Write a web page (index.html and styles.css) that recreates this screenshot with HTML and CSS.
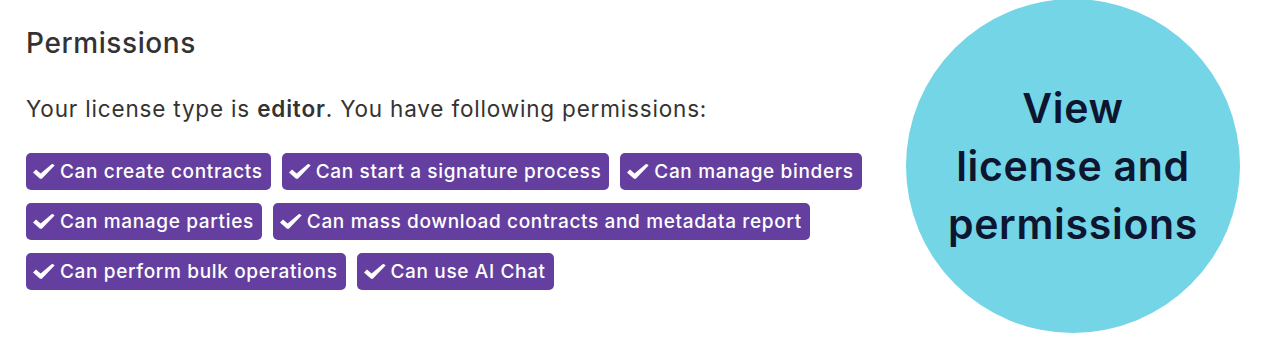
FILE: index.html
```html
<!DOCTYPE html>
<html>
<head>
<meta charset="utf-8">
<link rel="stylesheet" href="styles.css">
</head>
<body>
<div class="page">
  <section class="perms">
    <h2 class="title">Permissions</h2>
    <p class="intro">Your license type is <strong>editor</strong>. You have following permissions:</p>
    <div class="badges">
      <ul class="row">
        <li class="badge"><svg class="check" viewBox="0 0 22 15"><path d="M0 8.4 L3 5.4 L7.6 9.4 L18.6 0.2 Q20.4 -0.4 21.6 1.6 L8.8 14.8 L7 14.8 Z"/></svg>Can create contracts</li>
        <li class="badge"><svg class="check" viewBox="0 0 22 15"><path d="M0 8.4 L3 5.4 L7.6 9.4 L18.6 0.2 Q20.4 -0.4 21.6 1.6 L8.8 14.8 L7 14.8 Z"/></svg>Can start a signature process</li>
        <li class="badge"><svg class="check" viewBox="0 0 22 15"><path d="M0 8.4 L3 5.4 L7.6 9.4 L18.6 0.2 Q20.4 -0.4 21.6 1.6 L8.8 14.8 L7 14.8 Z"/></svg>Can manage binders</li>
      </ul>
      <ul class="row">
        <li class="badge"><svg class="check" viewBox="0 0 22 15"><path d="M0 8.4 L3 5.4 L7.6 9.4 L18.6 0.2 Q20.4 -0.4 21.6 1.6 L8.8 14.8 L7 14.8 Z"/></svg>Can manage parties</li>
        <li class="badge"><svg class="check" viewBox="0 0 22 15"><path d="M0 8.4 L3 5.4 L7.6 9.4 L18.6 0.2 Q20.4 -0.4 21.6 1.6 L8.8 14.8 L7 14.8 Z"/></svg>Can mass download contracts and metadata report</li>
      </ul>
      <ul class="row">
        <li class="badge"><svg class="check" viewBox="0 0 22 15"><path d="M0 8.4 L3 5.4 L7.6 9.4 L18.6 0.2 Q20.4 -0.4 21.6 1.6 L8.8 14.8 L7 14.8 Z"/></svg>Can perform bulk operations</li>
        <li class="badge"><svg class="check" viewBox="0 0 22 15"><path d="M0 8.4 L3 5.4 L7.6 9.4 L18.6 0.2 Q20.4 -0.4 21.6 1.6 L8.8 14.8 L7 14.8 Z"/></svg>Can use AI Chat</li>
      </ul>
    </div>
  </section>
  <a class="cta" href="#">View<br>license and<br>permissions</a>
</div>
</body>
</html>
```

FILE: styles.css
```css
html, body {
  margin: 0;
  padding: 0;
  background: #ffffff;
}
body {
  font-family: Inter, "Noto Sans", sans-serif;
  width: 1270px;
  height: 352px;
  overflow: hidden;
}
.page {
  display: flex;
  align-items: flex-start;
}
.perms {
  flex: 1;
  padding: 26px 0 0 26px;
}
.title {
  margin: 0;
  font-size: 28px;
  line-height: 34px;
  font-weight: 500;
  letter-spacing: 0.6px;
  color: #333333;
}
.intro {
  margin: 35px 0 0;
  font-size: 22.5px;
  line-height: 28px;
  font-weight: 400;
  letter-spacing: 0.82px;
  color: #333333;
}
.intro strong {
  font-weight: 600;
}
.badges {
  margin-top: 30px;
  display: flex;
  flex-direction: column;
  gap: 13px;
}
.row {
  list-style: none;
  margin: 0;
  padding: 0;
  display: flex;
  gap: 11px;
}
.badge {
  display: flex;
  align-items: center;
  gap: 5px;
  height: 37px;
  padding: 0 8px 0 7px;
  box-sizing: border-box;
  background: #643fa0;
  border-radius: 5px;
  color: #ffffff;
  font-size: 19px;
  font-weight: 500;
  letter-spacing: 0.65px;
}
.check {
  width: 22px;
  height: 15px;
  fill: #ffffff;
  flex: none;
}
.cta {
  flex: none;
  width: 334px;
  height: 334px;
  margin: -1px 30px 0 0;
  border-radius: 50%;
  background: #73d5e6;
  color: #0d1530;
  text-decoration: none;
  display: flex;
  align-items: center;
  justify-content: center;
  text-align: center;
  font-size: 41px;
  line-height: 58px;
  font-weight: 600;
  letter-spacing: 0.7px;
}
```
